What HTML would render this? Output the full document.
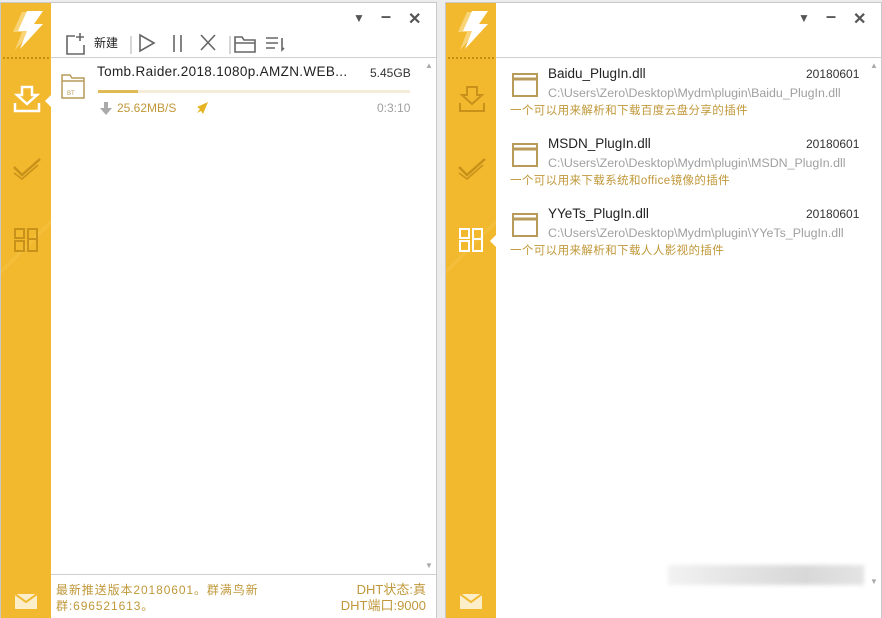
<!DOCTYPE html>
<html><head><meta charset="utf-8"><style>
*{margin:0;padding:0;box-sizing:border-box}
body{width:882px;height:618px;background:#ececec;position:relative;overflow:hidden;font-family:"Liberation Sans","Noto Sans CJK SC",sans-serif}
.win{position:absolute;top:2px;height:616px;background:#fff;border:1px solid #c9c9c9;border-bottom:none}
.side{position:absolute;left:0;top:0;width:50px;height:100%;background:linear-gradient(135deg,#f2b92e 0,#f2b92e 40%,#f4c040 40.3%,#f2b92e 41%,#f2b92e 100%)}
.side .dots{position:absolute;left:2px;right:2px;top:54px;border-top:2px dotted #c48f10}
.ab{position:absolute;font-size:12px;white-space:nowrap}
.ctl{position:absolute;top:10px;color:#555;font-size:15px;font-weight:bold}
.hline{position:absolute;height:1px;background:#cfcfcf}
.gold{color:#c0983a}
.gray{color:#a0a0a0}
</style></head><body>

<div class="win" style="left:0;width:437px">
 <div class="side">
  <svg style="position:absolute;left:8px;top:6px" width="36" height="42" viewBox="0 0 36 42"><path d="M16 2h16l-9 13h9L9 40l7-18H7z" fill="#fbe6a8" opacity=".6" transform="translate(-3,1)"/><path d="M18 2h16l-9 13h9L11 40l7-18H9z" fill="#fff"/></svg>
  <div class="dots"></div>
  <svg style="position:absolute;left:12px;top:82px" width="28" height="28" viewBox="0 0 28 28" fill="none" stroke="#fff" stroke-width="2.5"><path d="M9 2h10v8h5L14 19 4 10h5z"/><path d="M2 18v8h24v-8"/></svg>
  <div style="position:absolute;left:44px;top:92px;border:6px solid transparent;border-right-color:#fff;border-left:none"></div>
  <svg style="position:absolute;left:11px;top:154px" width="30" height="24" viewBox="0 0 30 24" fill="none" stroke="#c8911a" stroke-width="2.5"><path d="M2 10l8 8L28 2"/><path d="M2 16l8 6L26 8" stroke-width="1.5"/></svg>
  <svg style="position:absolute;left:12px;top:224px" width="26" height="26" viewBox="0 0 26 26" fill="none" stroke="#c8911a" stroke-width="2"><rect x="2" y="2" width="9" height="9"/><rect x="2" y="14" width="9" height="10"/><rect x="15" y="2" width="9" height="22"/><path d="M15 12h9"/></svg>
  <svg style="position:absolute;left:14px;top:591px" width="22" height="15" viewBox="0 0 22 15"><rect width="22" height="15" fill="#fbeec8"/><path d="M0 0l11 8 11-8" fill="none" stroke="#f2b92e" stroke-width="2"/></svg>
 </div>
 <div class="ctl" style="left:352px;top:8px;font-size:12px">&#9660;</div>
 <div class="ctl" style="left:380px;top:3px;font-size:18px">&#8211;</div>
 <div class="ctl" style="left:407px;top:6px;font-size:16px">&#10005;</div>
 <svg style="position:absolute;left:64px;top:29px" width="230" height="24" viewBox="0 0 230 24" fill="none" stroke="#666" stroke-width="1.6">
  <path d="M10 4H2v18h17v-9"/><path d="M15 1v8M11 5h8"/>
  <path d="M66 4v18" stroke="#ccc"/>
  <path d="M75 3l14 8-14 8z"/>
  <path d="M109 3v17M116 3v17"/>
  <path d="M136 3l14 15M150 3l-14 15"/>
  <path d="M165 4v18" stroke="#ccc"/>
  <path d="M170 5h7l2 3h11v12h-20z"/><path d="M170 11h20"/>
  <path d="M201 6h12M201 11h12M201 16h9M217 6v12l2-2"/>
 </svg>
 <div class="ab" style="left:93px;top:31px;color:#222">新建</div>
 <div class="hline" style="left:50px;right:0;top:54px"></div>
 <svg style="position:absolute;left:60px;top:70px" width="24" height="26" viewBox="0 0 24 26" fill="none" stroke="#b89a5a" stroke-width="1.5"><path d="M1 2h8l2 3h12v20H1z"/><path d="M1 8h22"/><text x="6" y="22" font-size="6" fill="#b89a5a" stroke="none" font-family="Liberation Sans">BT</text></svg>
 <div class="ab" style="left:96px;top:61px;font-size:13.5px;letter-spacing:0.35px;color:#222">Tomb.Raider.2018.1080p.AMZN.WEB...</div>
 <div class="ab" style="left:369px;top:63px;color:#333">5.45GB</div>
 <div style="position:absolute;left:97px;top:87px;width:312px;height:3px;background:#f4ecd8"></div>
 <div style="position:absolute;left:97px;top:87px;width:40px;height:3px;background:#e0bb55"></div>
 <svg style="position:absolute;left:99px;top:99px" width="12" height="13" viewBox="0 0 12 13" fill="#aaa"><rect x="4" y="0" width="4" height="7"/><path d="M0 6h12L6 13z"/></svg>
 <div class="ab gold" style="left:116px;top:98px">25.62MB/S</div>
 <svg style="position:absolute;left:194px;top:98px" width="14" height="14" viewBox="0 0 14 14" fill="#e6b422"><path d="M13 1L2 6l3 2-3 4 4-2 2 3z"/></svg>
 <div class="ab gray" style="left:376px;top:98px">0:3:10</div>
 <div class="ab" style="left:424px;top:58px;color:#aaa;font-size:8px">&#9650;</div>
 <div class="ab" style="left:424px;top:558px;color:#aaa;font-size:8px">&#9660;</div>
 <div class="hline" style="left:50px;right:0;top:571px"></div>
 <div class="ab gold" style="left:55px;top:579px;line-height:16px;letter-spacing:0.9px">最新推送版本20180601。群满鸟新<br>群:696521613。</div>
 <div class="ab gold" style="right:10px;top:579px;line-height:16px;text-align:right;font-size:13px">DHT状态:真<br>DHT端口:9000</div>
</div>

<div class="win" style="left:445px;width:437px">
 <div class="side">
  <svg style="position:absolute;left:8px;top:6px" width="36" height="42" viewBox="0 0 36 42"><path d="M16 2h16l-9 13h9L9 40l7-18H7z" fill="#fbe6a8" opacity=".6" transform="translate(-3,1)"/><path d="M18 2h16l-9 13h9L11 40l7-18H9z" fill="#fff"/></svg>
  <div class="dots"></div>
  <svg style="position:absolute;left:12px;top:82px" width="28" height="28" viewBox="0 0 28 28" fill="none" stroke="#c8911a" stroke-width="2"><path d="M9 2h10v8h5L14 19 4 10h5z"/><path d="M2 18v8h24v-8"/></svg>
  <svg style="position:absolute;left:11px;top:154px" width="30" height="24" viewBox="0 0 30 24" fill="none" stroke="#c8911a" stroke-width="2.5"><path d="M2 10l8 8L28 2"/><path d="M2 16l8 6L26 8" stroke-width="1.5"/></svg>
  <svg style="position:absolute;left:12px;top:224px" width="26" height="26" viewBox="0 0 26 26" fill="none" stroke="#fff" stroke-width="2"><rect x="2" y="2" width="9" height="9"/><rect x="2" y="14" width="9" height="10"/><rect x="15" y="2" width="9" height="22"/><path d="M15 12h9"/></svg>
  <div style="position:absolute;left:44px;top:232px;border:6px solid transparent;border-right-color:#fff;border-left:none"></div>
  <svg style="position:absolute;left:14px;top:591px" width="22" height="15" viewBox="0 0 22 15"><rect width="22" height="15" fill="#fbeec8"/><path d="M0 0l11 8 11-8" fill="none" stroke="#f2b92e" stroke-width="2"/></svg>
 </div>
 <div class="ctl" style="left:352px;top:8px;font-size:12px">&#9660;</div>
 <div class="ctl" style="left:380px;top:3px;font-size:18px">&#8211;</div>
 <div class="ctl" style="left:407px;top:6px;font-size:16px">&#10005;</div>
 <div class="hline" style="left:50px;right:0;top:54px"></div>
 <div class="ab" style="left:424px;top:58px;color:#aaa;font-size:8px">&#9650;</div>
 <div class="ab" style="left:424px;top:574px;color:#aaa;font-size:8px">&#9660;</div>

 <svg style="position:absolute;left:66px;top:70px" width="26" height="24" viewBox="0 0 26 24" fill="none" stroke="#b89a5a" stroke-width="2"><rect x="1" y="1" width="24" height="22"/><path d="M1 6h24" stroke-width="3"/></svg>
 <div class="ab" style="left:102px;top:63px;font-size:13.5px;color:#222">Baidu_PlugIn.dll</div>
 <div class="ab" style="left:360px;top:64px;color:#333">20180601</div>
 <div class="ab gray" style="left:102px;top:83px;font-size:12.4px">C:\Users\Zero\Desktop\Mydm\plugin\Baidu_PlugIn.dll</div>
 <div class="ab gold" style="left:64px;top:99px;font-size:11.5px;letter-spacing:0.4px">一个可以用来解析和下载百度云盘分享的插件</div>

 <svg style="position:absolute;left:66px;top:140px" width="26" height="24" viewBox="0 0 26 24" fill="none" stroke="#b89a5a" stroke-width="2"><rect x="1" y="1" width="24" height="22"/><path d="M1 6h24" stroke-width="3"/></svg>
 <div class="ab" style="left:102px;top:133px;font-size:13.5px;color:#222">MSDN_PlugIn.dll</div>
 <div class="ab" style="left:360px;top:134px;color:#333">20180601</div>
 <div class="ab gray" style="left:102px;top:153px;font-size:12.4px">C:\Users\Zero\Desktop\Mydm\plugin\MSDN_PlugIn.dll</div>
 <div class="ab gold" style="left:64px;top:169px;font-size:11.5px;letter-spacing:0.4px">一个可以用来下载系统和office镜像的插件</div>

 <svg style="position:absolute;left:66px;top:210px" width="26" height="24" viewBox="0 0 26 24" fill="none" stroke="#b89a5a" stroke-width="2"><rect x="1" y="1" width="24" height="22"/><path d="M1 6h24" stroke-width="3"/></svg>
 <div class="ab" style="left:102px;top:203px;font-size:13.5px;color:#222">YYeTs_PlugIn.dll</div>
 <div class="ab" style="left:360px;top:204px;color:#333">20180601</div>
 <div class="ab gray" style="left:102px;top:223px;font-size:12.4px">C:\Users\Zero\Desktop\Mydm\plugin\YYeTs_PlugIn.dll</div>
 <div class="ab gold" style="left:64px;top:239px;font-size:11.5px;letter-spacing:0.4px">一个可以用来解析和下载人人影视的插件</div>

 <div style="position:absolute;left:222px;top:562px;width:196px;height:20px;background:linear-gradient(90deg,#f2f2f2,#e2e2e2 40%,#d8d8d8 70%,#e4e4e4);filter:blur(2px)"></div>
</div>
</body></html>
